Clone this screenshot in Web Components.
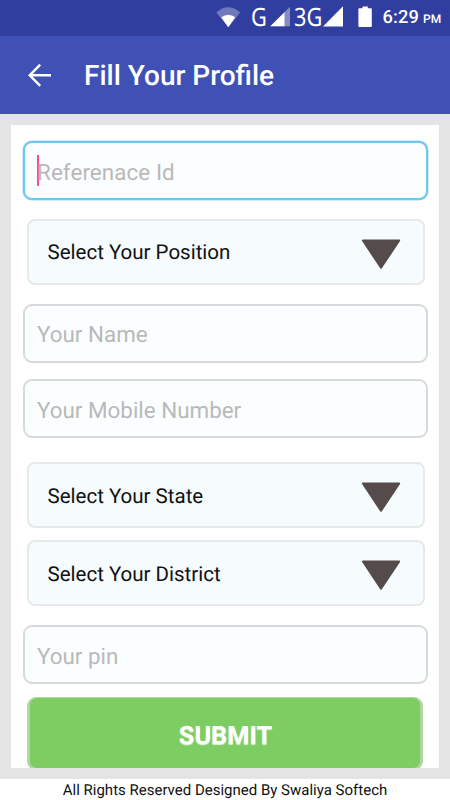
<!DOCTYPE html>
<html lang="en">
<head>
<meta charset="utf-8">
<title>Fill Your Profile</title>
<style>
html,body{margin:0;padding:0}
body{width:450px;height:800px;overflow:hidden;font-family:Roboto,sans-serif;text-rendering:geometricPrecision}
</style>
</head>
<body>
<profile-screen></profile-screen>
<script>
const define = (name, html) => {
  const template = document.createElement('template');
  template.innerHTML = html;
  customElements.define(name, class extends HTMLElement {
    constructor() {
      super();
      this.attachShadow({ mode: 'open' }).append(template.content.cloneNode(true));
    }
  });
};

define('status-bar', `
<style>
:host{display:flex;flex:none;align-items:center;height:35.5px;box-sizing:border-box;padding-left:216px;background:#303f9f;color:#fff;white-space:nowrap}
svg{display:block;flex:none}
.net{font:25.3px/35px "Noto Sans",sans-serif}
.g{width:18px;margin-left:9.5px}
.g3{width:27px;margin-left:3px}
.net span{display:inline-block;transform-origin:0 50%;transform:scaleX(.86)}
.time{font-weight:500;font-size:18.2px;line-height:36px;margin-left:10px;letter-spacing:.2px;padding-top:2px}
.time small{font-size:12px;margin-left:4px;letter-spacing:0}
</style>
<svg width="25" height="36" viewBox="0 0 25 36"><path d="M.3 12.5Q12.2 2.2 24.2 12.5L12.3 27.3Z" fill="#6f79bb"/><path d="M5.2 17.2Q12.3 12.2 19.3 17.2L12.3 27.3Z" fill="#fff"/></svg>
<div class="net g"><span>G</span></div>
<svg width="21" height="36" viewBox="0 0 21 36" style="margin-left:1.5px"><path d="M20 6.8V26.3H.3Z" fill="#838cc5"/><path d="M14.5 12.2V26.3H.3Z" fill="#fff"/></svg>
<div class="net g3"><span>3G</span></div>
<svg width="21" height="36" viewBox="0 0 21 36" style="margin-left:1.5px"><path d="M20 6.3V26.5H0Z" fill="#fff"/></svg>
<svg width="15" height="36" viewBox="0 0 15 36" style="margin-left:14px"><path d="M1.2 8.2H4.5V6.5H9.8V8.2H13Q13.8 8.2 13.8 9V26.2Q13.8 27 13 27H1.2Q.4 27 .4 26.2V9Q.4 8.2 1.2 8.2Z" fill="#fff"/></svg>
<div class="time">6:29<small>PM</small></div>`);

define('app-bar', `
<style>
:host{display:flex;flex:none;align-items:center;height:78px;box-sizing:border-box;padding-left:28px;background:#3f51b5;color:#fff}
svg{display:block;width:24px;height:24px}
h1{margin:2px 0 0 32px;font-size:28px;font-weight:500;line-height:40px;white-space:nowrap}
</style>
<svg viewBox="0 0 24 24" fill="none" stroke="#fff" stroke-width="2.4"><path d="M23 12.3H2M12.2 1.7L1.7 12.3L12.2 22.9"/></svg>
<h1><slot></slot></h1>`);

define('text-field', `
<style>
:host{display:flex;align-items:center;position:relative;box-sizing:border-box;width:405px;height:59px;margin-left:11.5px;padding:4.5px 0 0 12.5px;border:2px solid #d8d9da;border-radius:9px;background:#fbfeff;color:#b9b9b9;font-size:22.4px;line-height:30px;white-space:nowrap}
:host([focused]){border-color:#6ec7ef;box-shadow:0 0 0 .5px #9bd8f4}
i{display:none;position:absolute;left:12px;top:12.2px;width:2.3px;height:30.5px;background:#ff4a8c}
:host([focused]) i{display:block}
:host([focused]) span{letter-spacing:.08px}
</style>
<i></i><span style="position:relative"><slot></slot></span>`);

define('select-field', `
<style>
:host{display:flex;align-items:center;justify-content:space-between;box-sizing:border-box;width:398.5px;height:66px;margin-left:15.5px;padding:0 22.5px 0 19px;border:2px solid #e6e9e9;border-radius:8px;background:#f6fbfe;color:#111;font-size:20.5px;line-height:30px;white-space:nowrap}
span{padding-top:3px}
svg{display:block;width:40px;height:31px;margin-top:5px}
</style>
<span><slot></slot></span>
<svg viewBox="0 0 40 31"><path d="M1.9 1.5H38.2L20 28.8Z" fill="#554b4b" stroke="#554b4b" stroke-width="2" stroke-linejoin="round"/></svg>`);

define('submit-button', `
<style>
:host{display:flex;align-items:center;justify-content:center;box-sizing:border-box;width:396px;height:73px;margin-left:16px;border:solid #b1d6a2;border-width:1px 3px 2px;border-radius:9px;background:#b1d6a2}
div{align-self:stretch;flex:1;display:flex;align-items:center;justify-content:center;border-radius:7px;background:#7ecd62;color:#fff;font-weight:700;font-size:25.3px;padding:7px 0 0 1px;text-shadow:0 1px 1px #dff3d8}
</style>
<div><span><slot></slot></span></div>`);

define('profile-screen', `
<style>
:host{display:flex;flex-direction:column;width:450px;height:800px;background:#e4e4e4}
main{box-sizing:border-box;flex:none;width:428px;height:643px;margin:11.5px 0 11px 11px;padding-top:16px;background:#fff;overflow:hidden}
footer{flex:1;min-height:0;background:#fff;color:#111;text-align:center;font-size:15px;line-height:22px;white-space:nowrap}
.a{margin-top:18.5px}.b{margin-top:19px}.c{margin-top:16.5px}.d{margin-top:24px}.e{margin-top:12px}.f{margin-top:19px}.g{margin-top:13px}
</style>
<status-bar></status-bar>
<app-bar>Fill Your Profile</app-bar>
<main>
<text-field focused>Referenace Id</text-field>
<select-field class="a">Select Your Position</select-field>
<text-field class="b">Your Name</text-field>
<text-field class="c">Your Mobile Number</text-field>
<select-field class="d">Select Your State</select-field>
<select-field class="e">Select Your District</select-field>
<text-field class="f">Your pin</text-field>
<submit-button class="g">SUBMIT</submit-button>
</main>
<footer>All Rights Reserved Designed By Swaliya Softech</footer>`);
</script>
</body>
</html>
